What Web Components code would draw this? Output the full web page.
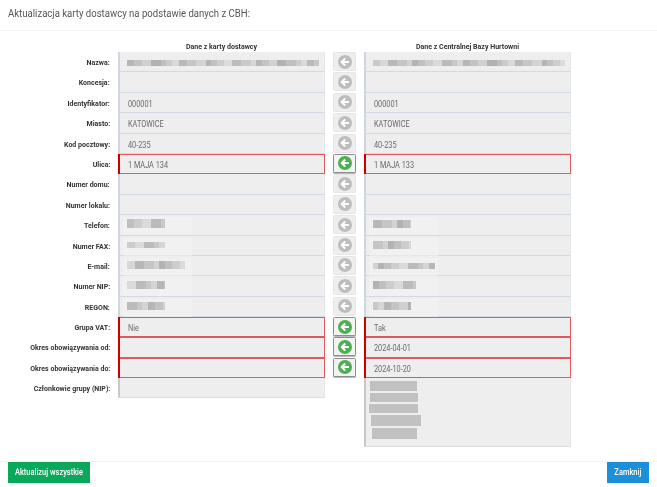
<!DOCTYPE html>
<html lang="pl">
<head>
<meta charset="utf-8">
<title>Aktualizacja karty dostawcy</title>
<style>
  html, body { margin: 0; padding: 0; background: #fff; }
  body { font-family: Roboto, "Liberation Sans", sans-serif; }
</style>
</head>
<body>
<update-dialog>
  <span slot="title">Aktualizacja karty dostawcy na podstawie danych z CBH:</span>

  <compare-row label="Nazwa:" left-blur="192,14,6,8" right-blur="192,2,6,8"></compare-row>
  <compare-row label="Koncesja:"></compare-row>
  <compare-row label="Identyfikator:" left="000001" right="000001"></compare-row>
  <compare-row label="Miasto:" left="KATOWICE" right="KATOWICE"></compare-row>
  <compare-row label="Kod pocztowy:" left="40-235" right="40-235"></compare-row>
  <compare-row label="Ulica:" left="1 MAJA 134" right="1 MAJA 133" changed></compare-row>
  <compare-row label="Numer domu:"></compare-row>
  <compare-row label="Numer lokalu:"></compare-row>
  <compare-row label="Telefon:" left-blur="38,8,9,4" right-blur="38,4,8,5"></compare-row>
  <compare-row label="Numer FAX:" left-blur="38,9,6,6" right-blur="38,5,8,5"></compare-row>
  <compare-row label="E-mail:" left-blur="58,3,8,5" right-blur="62,6,6,7"></compare-row>
  <compare-row label="Numer NIP:" left-blur="38,10,8,5" right-blur="43,7,8,5"></compare-row>
  <compare-row label="REGON:" left-blur="38,11,8,5" right-blur="38,12,8,5"></compare-row>
  <compare-row label="Grupa VAT:" left="Nie" right="Tak" changed></compare-row>
  <compare-row label="Okres obowiązywania od:" right="2024-04-01" changed></compare-row>
  <compare-row label="Okres obowiązywania do:" right="2024-10-20" changed></compare-row>
  <member-row label="Członkowie grupy (NIP):"></member-row>

  <action-button slot="left" color="#0aa85a" width="82">Aktualizuj wszystkie</action-button>
  <action-button slot="right" color="#1b8fd8" width="42">Zamknij</action-button>
</update-dialog>

<script>
class UpdateDialog extends HTMLElement {
  connectedCallback() {
    this.attachShadow({ mode: 'open' });
    this.shadowRoot.innerHTML = `
      <style>
        :host { display: flex; flex-direction: column; width: 657px; height: 487px; overflow: hidden; box-sizing: border-box; }
        header { height: 31px; box-sizing: border-box; padding: 6px 8px 0; font-size: 11.6px; line-height: 15px; color: #555; border-bottom: 1px solid #f4f4f4; }
        header span { display: inline-block; white-space: nowrap; transform: scaleX(.826); transform-origin: 0 50%; }
        .heads { display: grid; grid-template-columns: 118px 207px 39px 207px; margin-top: 10px; height: 11px; font-size: 8.1px; line-height: 10px; font-weight: 700; color: #333; text-align: center; }
        .heads span { transform: scaleX(.868); white-space: nowrap; }
        .heads span:first-child { grid-column: 2; }
        .heads span:last-child { grid-column: 4; }
        main { flex: 1; }
        footer { height: 26px; box-sizing: border-box; border-top: 1px solid #f2f2f2; padding: 0 8px; display: flex; justify-content: space-between; }
      </style>
      <header><span><slot name="title"></slot></span></header>
      <main>
        <div class="heads"><span>Dane z karty dostawcy</span><span>Dane z Centralnej Bazy Hurtowni</span></div>
        <slot></slot>
      </main>
      <footer><slot name="left"></slot><slot name="right"></slot></footer>
    `;
  }
}

// piece of data hidden in the screenshot, drawn as a blurred strip
function blurred(attr) {
  if (!attr) return '';
  const [w, seed, h, top] = attr.split(',').map(Number);
  const stops = [];
  let x = 0, i = seed;
  while (x < w) {
    const step = 5 + (i * 7) % 6;
    const shade = 176 + (i * 13) % 44;
    stops.push(`rgb(${shade},${shade},${shade}) ${x}px ${x + step}px`);
    x += step;
    i++;
  }
  const halo = w < 100 ? '<i class="halo"></i>' : '';
  return `${halo}<i class="strip" style="width:${w}px;height:${h}px;top:${top}px;background:linear-gradient(90deg,${stops.join(',')})"></i>`;
}

const fieldStyles = `
  :host { display: grid; grid-template-columns: 118px 207px 39px 207px; grid-template-rows: 20.4px; height: 20.4px; }
  .label { font-size: 8.1px; font-weight: 700; color: #333; text-align: right; padding-right: 8px; line-height: 21.5px; white-space: nowrap; }
  .label span { display: inline-block; transform: scaleX(.868); transform-origin: 100% 50%; }
  .field { position: relative; box-sizing: border-box; height: 20.4px; background: #eee; border-left: 2px solid #cfd6e0; border-bottom: 1px solid #d2d9e3; border-right: 1px solid #e4e8ee; padding-left: 8px; font-size: 9.4px; line-height: 21.5px; color: #6a6a6a; white-space: nowrap; }
  .field b { display: inline-block; font-weight: 400; transform: scaleX(.78); transform-origin: 0 50%; }
  .changed .field { border-left-color: #c90000; border-bottom: 0; border-right: 0; }
  .changed .field::after { content: ""; position: absolute; inset: 0; border: 1px solid #e0595d; border-left-width: 0; }
  .halo { position: absolute; left: 3px; top: 2px; width: 69px; height: 18px; background: rgba(244,244,244,.55); }
  .strip { position: absolute; left: 7px; filter: blur(.7px); }
  .cell { display: flex; justify-content: center; }
`;

class CompareRow extends HTMLElement {
  connectedCallback() {
    const changed = this.hasAttribute('changed');
    const left = this.getAttribute('left');
    const right = this.getAttribute('right');
    this.attachShadow({ mode: 'open' });
    this.shadowRoot.innerHTML = `
      <style>${fieldStyles}</style>
      <div class="label"><span>${this.getAttribute('label')}</span></div>
      <div class="${changed ? 'changed' : ''}"><div class="field">${left ? `<b>${left}</b>` : ''}${blurred(this.getAttribute('left-blur'))}</div></div>
      <div class="cell"><arrow-button ${changed ? 'active' : ''}></arrow-button></div>
      <div class="${changed ? 'changed' : ''}"><div class="field">${right ? `<b>${right}</b>` : ''}${blurred(this.getAttribute('right-blur'))}</div></div>
    `;
  }
}

class MemberRow extends HTMLElement {
  connectedCallback() {
    const bars = [[6, 47, 10], [6, 48, 9], [5, 49, 9], [6.5, 50, 11], [8, 45, 11]];
    this.attachShadow({ mode: 'open' });
    this.shadowRoot.innerHTML = `
      <style>
        ${fieldStyles}
        :host { grid-template-rows: 70px; height: 70px; }
        .left { height: 20px; border-left-color: #c9c9c9; border-bottom-color: #dcdcdc; }
        .right { padding: 3px 0 0; height: 69px; border-left-color: #c9c9c9; border-bottom-color: #dcdcdc; }
        .bar { height: var(--h); width: var(--w); margin: 0 0 2px var(--x); background: #c1c1c1; }
      </style>
      <div class="label"><span>${this.getAttribute('label')}</span></div>
      <div class="field left"></div>
      <div></div>
      <div class="field right">
        ${bars.map(b => `<div class="bar" style="--x:${b[0] - 2}px;--w:${b[1]}px;--h:${b[2]}px"></div>`).join('')}
      </div>
    `;
  }
}

class ArrowButton extends HTMLElement {
  connectedCallback() {
    const active = this.hasAttribute('active');
    this.attachShadow({ mode: 'open' });
    this.shadowRoot.innerHTML = `
      <style>
        :host { display: block; width: 23px; height: 19px; box-sizing: border-box; border-radius: 1.5px;
          background: ${active ? '#f3f3f3' : '#eee'};
          border: 1px solid ${active ? '#8d8d8d' : '#e6e6e6'};
          ${active ? 'box-shadow: 0 1px 0 #bbb;' : ''} }
        svg { display: block; width: 14px; height: 14px; margin: 1.5px auto 0; }
      </style>
      <svg viewBox="0 0 14 14">
        <circle cx="7" cy="7" r="7" fill="${active ? '#4caf50' : '#bdbdbd'}"/>
        <path d="M11 7H4.2M7.2 3.6 3.8 7l3.4 3.4" fill="none" stroke="#fff" stroke-width="2.1"/>
      </svg>
    `;
  }
}

class ActionButton extends HTMLElement {
  connectedCallback() {
    this.attachShadow({ mode: 'open' });
    this.shadowRoot.innerHTML = `
      <style>
        :host { display: flex; justify-content: center; width: ${this.getAttribute('width')}px; height: 21px; box-sizing: border-box; background: ${this.getAttribute('color')}; color: #fff; font-size: 8.8px; font-weight: 500; line-height: 20px; white-space: nowrap; }
        span { display: block; transform: scaleX(.85); }
      </style>
      <span><slot></slot></span>
    `;
  }
}

customElements.define('update-dialog', UpdateDialog);
customElements.define('compare-row', CompareRow);
customElements.define('member-row', MemberRow);
customElements.define('arrow-button', ArrowButton);
customElements.define('action-button', ActionButton);
</script>
</body>
</html>
